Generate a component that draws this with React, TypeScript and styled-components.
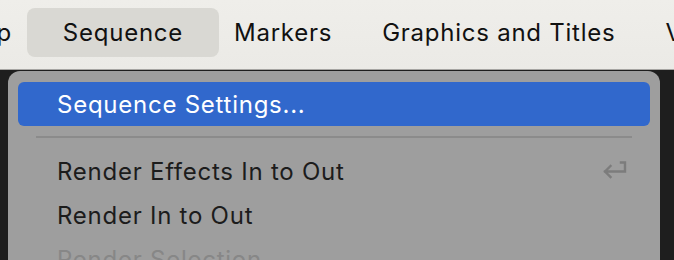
import React from "react";
import styled, { createGlobalStyle } from "styled-components";

const Global = createGlobalStyle`
  html, body { margin: 0; padding: 0; background: #1e1e1e; }
  body { width: 674px; height: 260px; overflow: hidden; font-family: Inter, "Noto Sans", sans-serif; -webkit-font-smoothing: antialiased; }
`;

const Page = styled.div`
  position: relative;
  width: 674px;
  height: 260px;
  overflow: hidden;
  background: #1e1e1e;
`;

const MenuBar = styled.div`
  height: 70px;
  box-sizing: border-box;
  background: linear-gradient(#efeeea, #ebeae6);
  border-bottom: 1px solid #a6a5a2;
  display: flex;
  align-items: flex-start;
  padding-top: 8px;
  margin-left: -60px;
  white-space: nowrap;
`;

const BarItem = styled.div<{ $active?: boolean }>`
  height: 49px;
  flex: none;
  display: flex;
  align-items: center;
  padding: 0 ${(p) => (p.$active ? 36 : 25)}px;
  margin: 0 ${(p) => (p.$active ? -10 : 0)}px;
  border-radius: 8px;
  background: ${(p) => (p.$active ? "#d9d8d3" : "transparent")};
  font-size: 24px;
  letter-spacing: 0.75px;
  color: #111;
`;

const Menu = styled.div`
  position: absolute;
  left: 8px;
  top: 71px;
  width: 652px;
  height: 230px;
  box-sizing: border-box;
  background: #9e9e9e;
  border-radius: 12px;
  padding: 11px 10px;
  display: flex;
  flex-direction: column;
`;

const Item = styled.div<{ $selected?: boolean; $disabled?: boolean }>`
  height: 44px;
  flex: none;
  display: flex;
  align-items: center;
  justify-content: space-between;
  padding: 0 22px 0 39px;
  border-radius: 6px;
  font-size: 24px;
  letter-spacing: 0.75px;
  background: ${(p) => (p.$selected ? "#3168cc" : "transparent")};
  color: ${(p) => (p.$selected ? "#ffffff" : p.$disabled ? "#878787" : "#1c1c1c")};
`;

const Separator = styled.div`
  height: 2px;
  background: #8b8b8b;
  margin: 10px 18px 11px 18px;
  flex: none;
`;

const Shortcut = styled.span`
  display: flex;
  align-items: center;
`;

const ReturnIcon = () => (
  <svg width="26" height="22" viewBox="0 0 26 22" fill="none">
    <path d="M19 2.5 H23 V11.5 H3 M3 11.5 L8.5 6 M3 11.5 L8.5 17" stroke="#7c7c7c" strokeWidth="2.4" strokeLinecap="square" strokeLinejoin="miter" />
  </svg>
);

export default function App() {
  return (
    <Page>
      <Global />
      <MenuBar>
        <BarItem>Clip</BarItem>
        <BarItem $active>Sequence</BarItem>
        <BarItem>Markers</BarItem>
        <BarItem>Graphics and Titles</BarItem>
        <BarItem>View</BarItem>
      </MenuBar>
      <Menu>
        <Item $selected>Sequence Settings...</Item>
        <Separator />
        <Item>
          Render Effects In to Out
          <Shortcut><ReturnIcon /></Shortcut>
        </Item>
        <Item>Render In to Out</Item>
        <Item $disabled>Render Selection</Item>
      </Menu>
    </Page>
  );
}
